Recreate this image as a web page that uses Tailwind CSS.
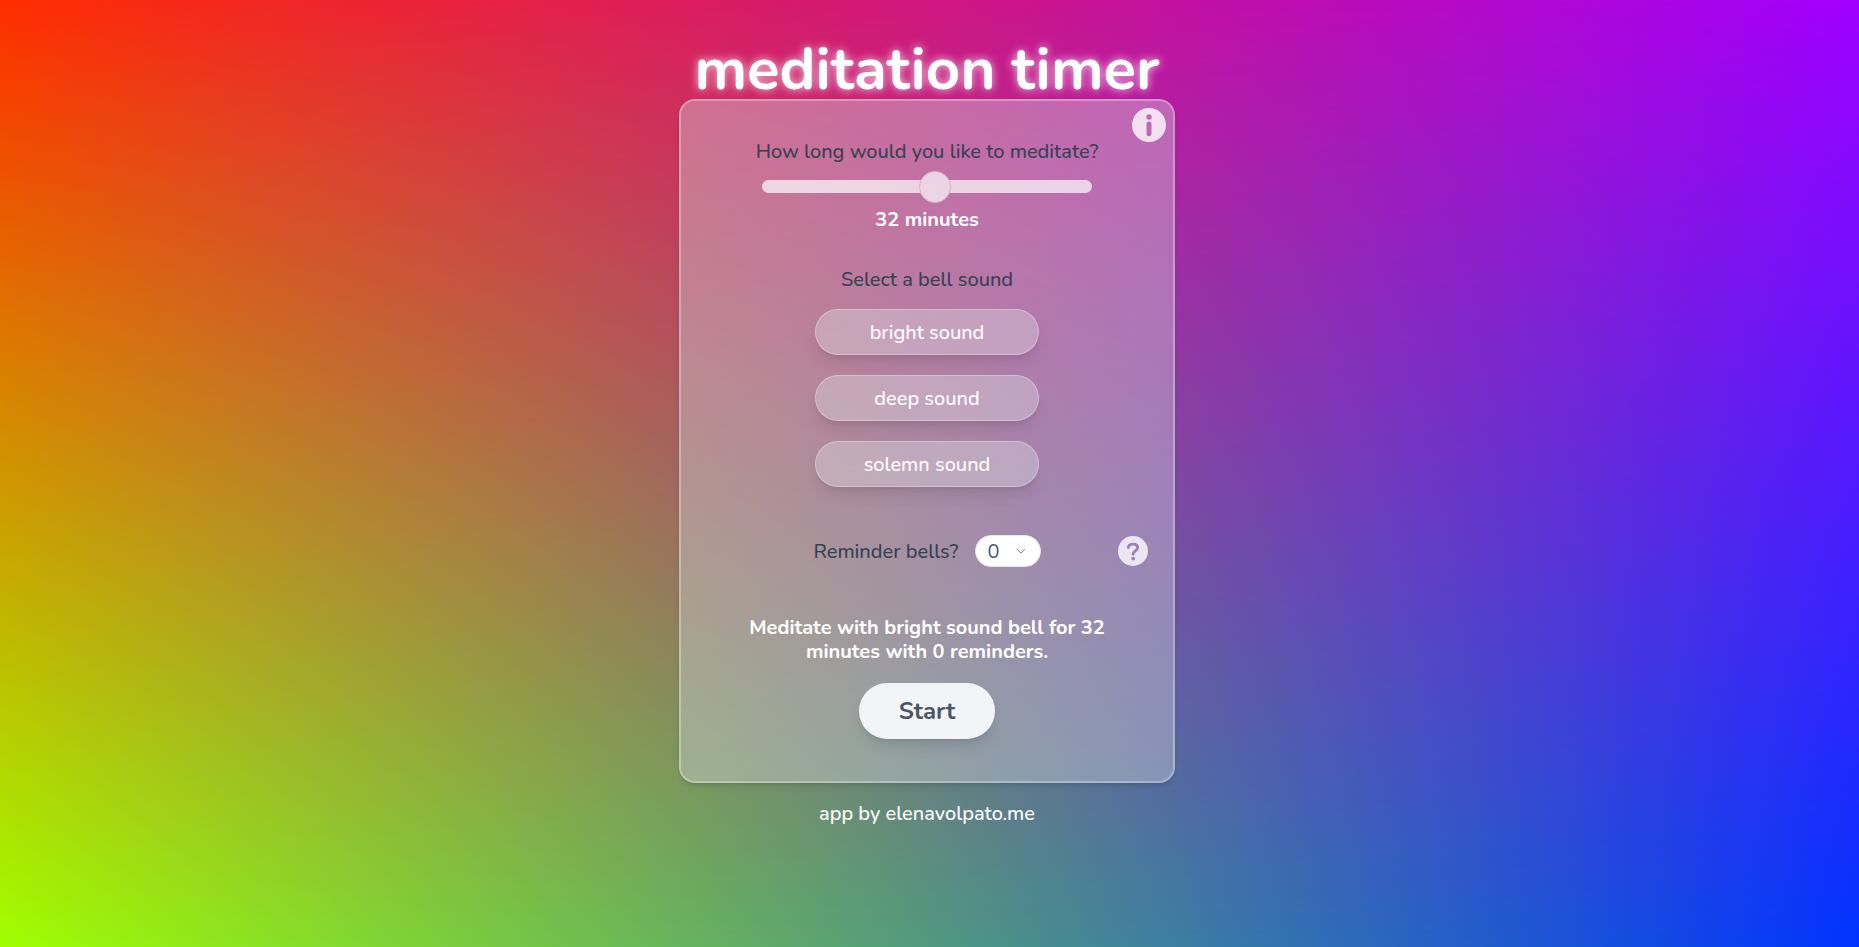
<!DOCTYPE html>
<html lang="en">
<head>
<meta charset="utf-8">
<meta name="viewport" content="width=device-width, initial-scale=1">
<title>meditation timer</title>
<script src="https://cdn.jsdelivr.net/npm/@tailwindcss/browser@4"></script>
</head>
<body class="relative isolate min-h-screen bg-[linear-gradient(to_right,#ff2d00,#a100ff)] pr-[5px] font-['Nunito','Open_Sans',sans-serif] text-xl leading-7 font-medium text-white">
<!-- Second colour row, faded in from top to bottom -->
<div class="absolute inset-0 -z-10 bg-[linear-gradient(to_right,#a1ff00,#0033ff)] [mask-image:linear-gradient(to_bottom,transparent,black)]"></div>

<div class="flex flex-col items-center pt-[39px]">
  <h1 class="text-6xl leading-[60px] font-bold [text-shadow:0_0_10px_rgba(255,255,255,0.8)]">meditation timer</h1>

  <main class="relative flex w-full max-w-[496px] flex-col items-center rounded-2xl border-2 border-white/30 bg-gray-300/40 pt-[37px] pb-[42px] shadow-md">
    <button type="button" aria-label="About this app" class="absolute top-[7px] right-[7px] size-[34px] opacity-80">
      <svg viewBox="0 0 34 34" class="size-full" fill="white"><path fill-rule="evenodd" d="M17 0a17 17 0 1 1 0 34a17 17 0 0 1 0-34ZM17 6.300a2.700 2.700 0 1 0 0 5.400a2.700 2.700 0 0 0 0-5.400ZM17 13.500a2.500 2.500 0 0 0-2.500 2.500v9.800a2.500 2.500 0 0 0 5 0v-9.800a2.500 2.500 0 0 0-2.500-2.500Z"/></svg>
    </button>

    <label for="minutes" class="text-gray-700">How long would you like to meditate?</label>
    <input id="minutes" type="range" min="1" max="60" value="32" class="mt-[14px] h-[13px] w-[330px] appearance-none rounded-full bg-white opacity-70 [&::-webkit-slider-thumb]:size-8 [&::-webkit-slider-thumb]:appearance-none [&::-webkit-slider-thumb]:rounded-full [&::-webkit-slider-thumb]:border [&::-webkit-slider-thumb]:border-gray-300 [&::-webkit-slider-thumb]:bg-white">
    <output for="minutes" class="mt-[13px] font-bold">32 minutes</output>

    <h2 class="mt-8 font-medium text-gray-700">Select a bell sound</h2>
    <div class="mt-[15px] flex w-56 flex-col gap-5">
      <button type="button" class="h-[46px] rounded-full border border-white/30 bg-gray-200/35 pt-0.5 shadow-lg">bright sound</button>
      <button type="button" class="h-[46px] rounded-full border border-white/30 bg-gray-200/35 pt-0.5 shadow-lg">deep sound</button>
      <button type="button" class="h-[46px] rounded-full border border-white/30 bg-gray-200/35 pt-0.5 shadow-lg">solemn sound</button>
    </div>

    <div class="mt-12 grid w-full grid-cols-[1fr_auto_1fr] items-center">
      <div class="col-start-2 flex items-center gap-4">
        <label for="bells" class="pt-0.5 text-gray-700">Reminder bells?</label>
        <div class="relative">
          <select id="bells" class="block h-8 w-[66px] appearance-none rounded-full border border-gray-200 bg-white pt-0.5 pl-3 leading-7 font-normal text-gray-600">
            <option>0</option><option>1</option><option>2</option><option>3</option>
          </select>
          <svg viewBox="0 0 8 5" class="pointer-events-none absolute top-[14px] right-4 h-[5px] w-2" fill="none" stroke="#6b8299" stroke-linecap="round" stroke-linejoin="round"><path d="M.5.5 4 4 7.500.5"/></svg>
        </div>
      </div>
      <button type="button" aria-label="Help with reminder bells" class="mr-[25px] size-[30px] justify-self-end">
        <svg viewBox="0 0 30 30" class="size-full"><circle cx="15" cy="15" r="15" fill="white" fill-opacity=".8"/><g class="text-[#9c82b6]"><path d="M10.400 11.500C10.500 9.300 12.300 8.100 15 8.100c2.700 0 4.600 1.400 4.600 3.600 0 3.200-4.500 3.300-4.500 6.500" fill="none" stroke="currentColor" stroke-width="2.900" stroke-linecap="round"/><circle cx="15.200" cy="22.600" r="1.900" fill="currentColor"/></g></svg>
      </button>
    </div>

    <p class="mt-[49px] max-w-[380px] text-center leading-6 font-bold">Meditate with bright sound bell for 32 minutes with 0 reminders.</p>
    <button type="button" class="mt-[19px] h-14 w-[136px] rounded-full bg-gray-100 text-2xl font-bold text-gray-600 shadow-lg">Start</button>
  </main>

  <footer class="mt-[17px]"><a href="https://elenavolpato.me">app by elenavolpato.me</a></footer>
</div>
</body>
</html>
